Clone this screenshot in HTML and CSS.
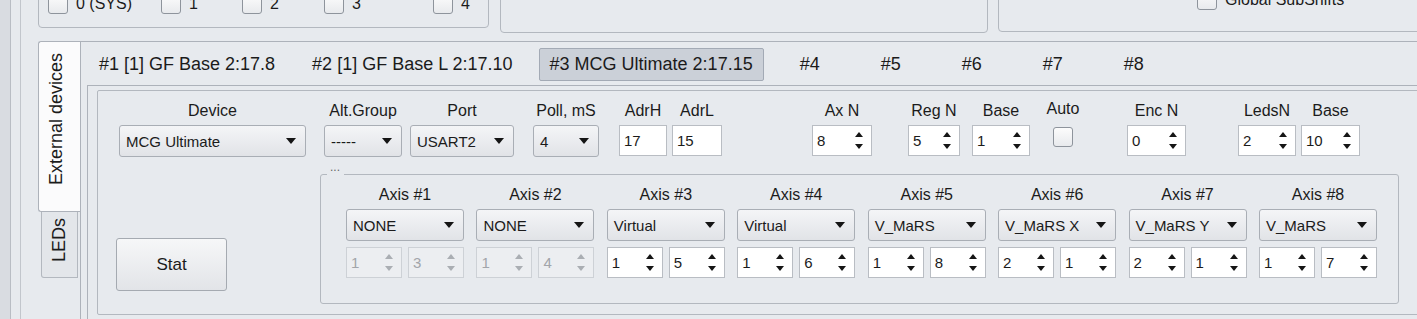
FILE: index.html
```html
<!DOCTYPE html>
<html lang="en">
<head>
    <meta charset="UTF-8">
    <title>External devices</title>
    <link rel="stylesheet" href="styles.css">
</head>
<body>
<div class="window">
    <div class="strip"></div>
    <div class="main">
        <!-- top group boxes, only their lower part is visible -->
        <div class="topbar">
            <div class="tbox tbox1">
                <label class="chk c0"><span class="cb"></span>0 (SYS)</label>
                <label class="chk c1"><span class="cb"></span>1</label>
                <label class="chk c2"><span class="cb"></span>2</label>
                <label class="chk c3"><span class="cb"></span>3</label>
                <label class="chk"><span class="cb"></span>4</label>
            </div>
            <div class="tbox tbox2"></div>
            <div class="tbox tbox3">
                <label class="chk"><span class="cb"></span>Global SubShifts</label>
            </div>
        </div>

        <div class="outer">
            <div class="vtabs">
                <div class="vtab on"><span>External devices</span></div>
                <div class="vtab off"><span>LEDs</span></div>
            </div>
            <div class="opane">
                <div class="dtabs">
                    <div class="dtab">#1 [1] GF Base 2:17.8</div>
                    <div class="dtab">#2 [1] GF Base L 2:17.10</div>
                    <div class="dtab on">#3 MCG Ultimate 2:17.15</div>
                    <div class="dtab short">#4</div>
                    <div class="dtab short">#5</div>
                    <div class="dtab short">#6</div>
                    <div class="dtab short">#7</div>
                    <div class="dtab short">#8</div>
                </div>
                <div class="ipane">
                    <div class="frame">
                        <div class="row1">
                            <div class="fld f-dev"><div class="lbl">Device</div><div class="combo">MCG Ultimate</div></div>
                            <div class="fld f-alt"><div class="lbl">Alt.Group</div><div class="combo">-----</div></div>
                            <div class="fld f-port"><div class="lbl">Port</div><div class="combo">USART2</div></div>
                            <div class="fld f-poll"><div class="lbl">Poll, mS</div><div class="combo">4</div></div>
                            <div class="fld f-adrh"><div class="lbl">AdrH</div><div class="edit">17</div></div>
                            <div class="fld f-adrl"><div class="lbl">AdrL</div><div class="edit">15</div></div>
                            <div class="fld f-axn"><div class="lbl">Ax N</div><div class="spin">8<i class="arr"></i></div></div>
                            <div class="fld f-regn"><div class="lbl">Reg N</div><div class="spin">5<i class="arr"></i></div></div>
                            <div class="fld f-base"><div class="lbl">Base</div><div class="spin">1<i class="arr"></i></div></div>
                            <div class="fld f-auto"><div class="lbl">Auto</div><span class="cb"></span></div>
                            <div class="fld f-enc"><div class="lbl">Enc N</div><div class="spin">0<i class="arr"></i></div></div>
                            <div class="fld f-leds"><div class="lbl">LedsN</div><div class="spin">2<i class="arr"></i></div></div>
                            <div class="fld f-base2"><div class="lbl">Base</div><div class="spin">10<i class="arr"></i></div></div>
                        </div>
                        <div class="row2">
                            <div class="side"><button class="btn">Stat</button></div>
                            <div class="axes">
                                <span class="axes-title">...</span>
                                <div class="axgrid">
                                    <div class="axis">
                                        <div class="lbl">Axis #1</div>
                                        <div class="combo">NONE</div>
                                        <div class="pair"><div class="spin dis">1<i class="arr"></i></div><div class="spin dis">3<i class="arr"></i></div></div>
                                    </div>
                                    <div class="axis">
                                        <div class="lbl">Axis #2</div>
                                        <div class="combo">NONE</div>
                                        <div class="pair"><div class="spin dis">1<i class="arr"></i></div><div class="spin dis">4<i class="arr"></i></div></div>
                                    </div>
                                    <div class="axis">
                                        <div class="lbl">Axis #3</div>
                                        <div class="combo">Virtual</div>
                                        <div class="pair"><div class="spin">1<i class="arr"></i></div><div class="spin">5<i class="arr"></i></div></div>
                                    </div>
                                    <div class="axis">
                                        <div class="lbl">Axis #4</div>
                                        <div class="combo">Virtual</div>
                                        <div class="pair"><div class="spin">1<i class="arr"></i></div><div class="spin">6<i class="arr"></i></div></div>
                                    </div>
                                    <div class="axis">
                                        <div class="lbl">Axis #5</div>
                                        <div class="combo">V_MaRS</div>
                                        <div class="pair"><div class="spin">1<i class="arr"></i></div><div class="spin">8<i class="arr"></i></div></div>
                                    </div>
                                    <div class="axis">
                                        <div class="lbl">Axis #6</div>
                                        <div class="combo">V_MaRS X</div>
                                        <div class="pair"><div class="spin">2<i class="arr"></i></div><div class="spin">1<i class="arr"></i></div></div>
                                    </div>
                                    <div class="axis">
                                        <div class="lbl">Axis #7</div>
                                        <div class="combo">V_MaRS Y</div>
                                        <div class="pair"><div class="spin">2<i class="arr"></i></div><div class="spin">1<i class="arr"></i></div></div>
                                    </div>
                                    <div class="axis">
                                        <div class="lbl">Axis #8</div>
                                        <div class="combo">V_MaRS</div>
                                        <div class="pair"><div class="spin">1<i class="arr"></i></div><div class="spin">7<i class="arr"></i></div></div>
                                    </div>
                                </div>
                            </div>
                        </div>
                    </div>
                </div>
            </div>
        </div>
    </div>
</div>
</body>
</html>
```

FILE: styles.css
```css
*{box-sizing:border-box;margin:0;padding:0;}
body{
    background:#e7eaee;
    font-family:"Liberation Sans",Arial,sans-serif;
    color:#1b1b1b;
    width:1417px;
    height:319px;
    overflow:hidden;
}
.window{display:flex;width:1480px;height:319px;}
.strip{width:11px;background:#d9dce1;border-right:1px solid #b9bdc4;}
.main{margin-left:9px;border-left:1px solid #c2c6cc;flex:1;}

/* top boxes */
.topbar{height:41px;display:flex;align-items:flex-start;}
.tbox{border:1px solid #b3b8bf;border-radius:4px;margin-top:-20px;}
.tbox1{margin-left:17px;width:451px;height:48px;display:flex;align-items:flex-end;padding:0 0 13px 9px;}
.tbox2{margin-left:11px;width:488px;height:53px;}
.tbox3{margin-left:10px;flex:1;height:52px;display:flex;align-items:flex-end;padding:0 0 21px 198px;}
.chk{display:flex;align-items:center;font-size:16px;line-height:20px;white-space:nowrap;}
.c0{width:113px;}
.c1{width:81px;}
.c2{width:82px;}
.c3{width:109px;}
.cb{
    display:block;
    width:20px;height:20px;
    border:1px solid #8e949c;
    border-radius:3px;
    background:linear-gradient(#fcfcfc,#e8eaed);
    margin-right:8px;
}

/* outer tab widget (tabs on the left) */
.outer{display:flex;height:278px;}
.vtabs{margin-left:17px;width:42px;display:flex;flex-direction:column;}
.vtab{display:flex;align-items:center;justify-content:center;font-size:18px;}
.vtab span{writing-mode:vertical-rl;transform:rotate(180deg);line-height:20px;}
.vtab.on{
    height:171px;
    background:#fbfbfc;
    border:1px solid #adb2ba;
    border-right:none;
    border-radius:3px 0 0 3px;
    padding:0 7px 15px 0;
}
.vtab.off{
    margin-left:3px;width:37px;height:66px;
    background:#e3e6ea;
    border:1px solid #b3b8bf;
    border-top:none;
    border-radius:0 0 0 3px;
    padding:0 2px 8px 0;
}
.opane{flex:1;border-left:1px solid #adb2ba;border-top:1px solid #adb2ba;padding:6px 0 0 6px;}

/* device tabs */
.dtabs{display:flex;gap:15px;height:33px;padding-left:1px;font-size:18px;}
.dtab{padding:0 10px;line-height:31px;border:1px solid transparent;border-radius:2px;white-space:nowrap;}
.dtab.on{background:#cbd0d8;border-color:#a3aab5;}
.dtab.short{padding:0 24px 0 20px;}

.ipane{margin-top:4px;border-left:1px solid #adb2ba;border-top:1px solid #adb2ba;padding:4px 0 0 9px;height:240px;}
.frame{width:1370px;height:225px;border:1px solid #b3b8bf;border-radius:2px;}

/* first row of fields */
.row1{display:flex;padding-top:10px;}
.fld{display:flex;flex-direction:column;align-items:center;}
.lbl{font-size:16px;line-height:20px;height:20px;margin-bottom:4px;white-space:nowrap;text-align:center;}
.f-dev{margin-left:21px;width:187px;}
.f-alt{margin-left:18px;width:78px;}
.f-port{margin-left:8px;width:104px;}
.f-poll{margin-left:19px;width:66px;}
.f-adrh{margin-left:20px;width:48px;}
.f-adrl{margin-left:5px;width:50px;}
.f-axn{margin-left:90px;width:60px;}
.f-regn{margin-left:36px;width:52px;}
.f-base{margin-left:12px;width:58px;}
.f-auto{margin-left:17px;width:32px;}
.f-enc{margin-left:48px;width:59px;}
.f-leds{margin-left:52px;width:58px;}
.f-base2{margin-left:5px;width:59px;}
.f-auto .lbl{margin-top:-2px;margin-bottom:8px;}
.f-auto .cb{margin-right:0;}
.fld .combo,.fld .edit,.fld .spin{width:100%;}

.combo{
    display:flex;align-items:center;
    height:32px;
    padding-left:6px;
    border:1px solid #a9aeb5;
    border-radius:3px;
    background:linear-gradient(#f4f5f7,#e1e3e7);
    font-size:15px;
    white-space:nowrap;
}
.combo::after{
    content:"";
    margin-left:auto;margin-right:9px;
    border-left:5.5px solid transparent;
    border-right:5.5px solid transparent;
    border-top:6px solid #151515;
}
.edit,.spin{
    display:flex;align-items:center;
    height:31px;
    padding-left:4px;
    border:1px solid #b9bdc3;
    background:#fff;
    font-size:15px;
}
.arr{display:flex;flex-direction:column;justify-content:space-between;height:17px;margin-left:auto;margin-right:8px;}
.arr::before,.arr::after{content:"";border-left:4.5px solid transparent;border-right:4.5px solid transparent;}
.arr::before{border-bottom:5px solid #151515;}
.arr::after{border-top:5px solid #151515;}
.spin.dis{background:#eceef1;border-color:#cdd1d6;color:#a2a5aa;}
.spin.dis .arr::before{border-bottom-color:#aaaeb3;}
.spin.dis .arr::after{border-top-color:#aaaeb3;}

/* second row */
.row2{display:flex;}
.side{width:222px;}
.btn{
    margin:81px 0 0 18px;
    width:111px;height:53px;
    border:1px solid #a5aab1;
    border-radius:3px;
    background:linear-gradient(#f6f7f8,#e2e4e8);
    font-family:"Liberation Sans",Arial,sans-serif;
    font-size:17px;
    color:#1b1b1b;
}
.axes{
    position:relative;
    width:1079px;
    margin-top:17px;
    padding:10px 21px 25px 25px;
    border:1px solid #b3b8bf;
    border-radius:3px;
}
.axes-title{
    position:absolute;left:6px;top:-17px;
    padding:0 4px 0 3px;
    background:#e7eaee;
    font-size:12px;line-height:18px;
    color:#666;
}
.axgrid{display:grid;grid-template-columns:repeat(8,118px);column-gap:12.43px;}
.axis{display:flex;flex-direction:column;}
.pair{display:flex;gap:6px;margin-top:6px;}
.pair .spin{width:56px;}
```
